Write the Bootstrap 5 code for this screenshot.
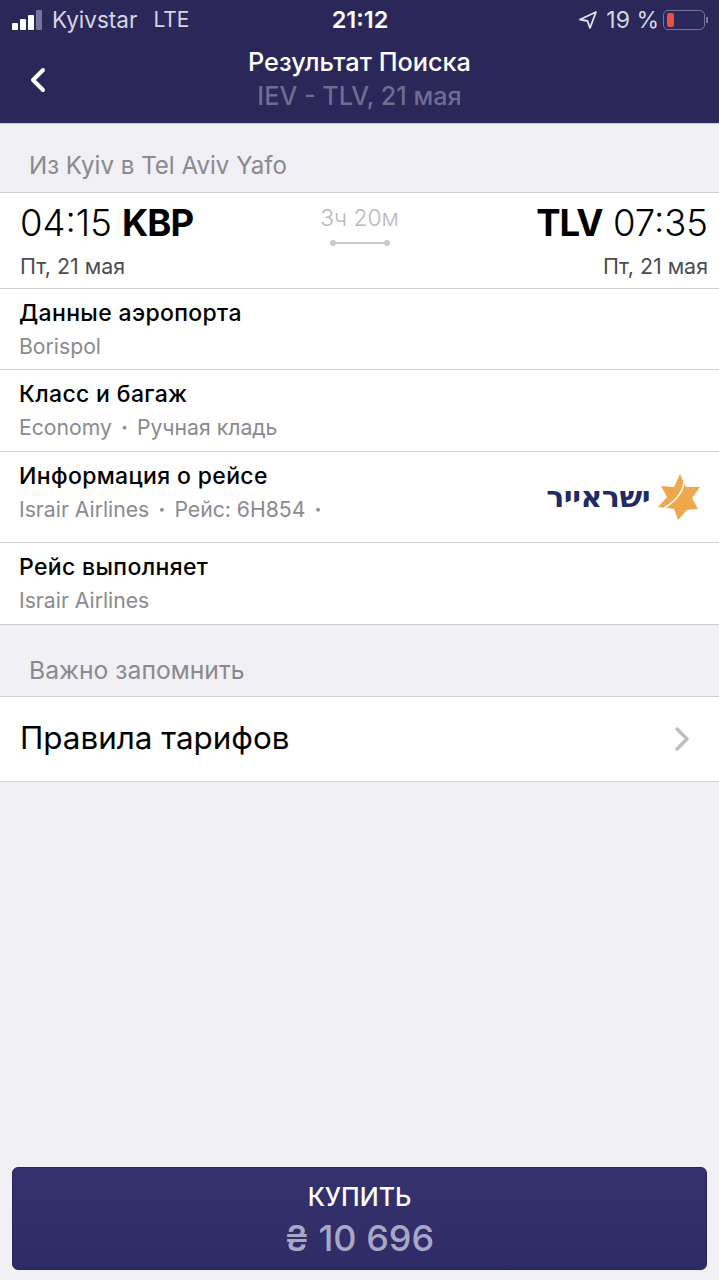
<!DOCTYPE html>
<html lang="en">
<head>
  <meta charset="UTF-8">
  <meta name="viewport" content="width=device-width, initial-scale=1.0">
  <title>Результат Поиска</title>
  <link href="https://cdn.jsdelivr.net/npm/bootstrap@5.3.2/dist/css/bootstrap.min.css" rel="stylesheet">
  <style>
    body {
      background: #f0f0f5;
      font-family: Inter, "Noto Sans", sans-serif;
      color: #000;
      height: 1280px;
      overflow: hidden;
    }
    .app-head {
      background: #2b2759;
      color: #fff;
      height: 124px;
      border-bottom: 1px solid #c9c8d8;
    }
    .status-line {
      height: 40px;
      padding: 0 11px 0 12px;
      font-size: 21px;
    }
    .status-line .carrier { color: #d6d5e4; font-size: 22.5px; }
    .status-line .lte-mark { margin-left: 16px; font-size: 21px; }
    .status-line .batt-pct { font-size: 23px; }
    .status-time { font-weight: 600; font-size: 23.5px; }
    .status-side { width: 250px; }
    .signal-bars { gap: 2px; height: 20px; margin-right: 10px; }
    .signal-bars i { display: block; width: 6px; border-radius: 1px; background: #fff; }
    .batt-box {
      width: 42px; height: 20px; padding: 2px 3px;
      border: 1.5px solid #77749a; border-radius: 5px;
    }
    .batt-box i { display: block; width: 7px; height: 100%; background: #e9503f; border-radius: 2px; }
    .batt-tip { width: 2px; height: 6px; background: #77749a; margin-left: 1px; }
    .title-zone { height: 84px; }
    .back-btn { left: 29px; top: 27px; }
    .page-title { font-size: 25.3px; font-weight: 500; line-height: 34px; padding-top: 5px; }
    .page-sub { font-size: 25.2px; font-weight: 500; line-height: 34px; color: #6f6c92; }
    .section-head {
      height: 68px;
      padding: 26px 29px 0;
      font-size: 24.1px;
      line-height: 32px;
      color: #8a8a90;
    }
    .info-block { background: #fff; border-top: 1px solid #cfcfd4; border-bottom: 1px solid #cfcfd4; }
    .flight-row { height: 96px; padding: 6px 11px 0 20px; border-bottom: 1px solid #cfcfd4; }
    .flight-side { flex: 1 1 0; }
    .time-big { font-size: 36.5px; line-height: 48px; font-weight: 300; }
    .time-big b { font-weight: 700; letter-spacing: -1px; }
    .date-small { font-size: 21.4px; line-height: 28px; color: #4c4c50; margin-top: 5px; }
    .dur-box { width: 100px; padding-top: 5px; margin-right: 9px; }
    .dur-text { font-size: 22.8px; line-height: 28px; color: #b9b9bd; font-weight: 300; }
    .dur-line { width: 60px; height: 2px; background: #c9c9cc; margin-top: 10px; }
    .dur-line::before, .dur-line::after {
      content: ""; position: absolute; top: -2px;
      width: 6px; height: 6px; border-radius: 50%; background: #c9c9cc;
    }
    .dur-line::before { left: 0; }
    .dur-line::after { right: 0; }
    .detail-row { padding: 0 19px; border-bottom: 1px solid #cfcfd4; overflow: hidden; }
    .detail-row:last-child { border-bottom: 0; }
    .row-short { height: 81px; }
    .row-mid { height: 82px; }
    .row-tall { height: 91px; }
    .detail-label { font-size: 23px; font-weight: 500; line-height: 30px; letter-spacing: .35px; margin-top: 9px; }
    .detail-value { font-size: 21.2px; line-height: 28px; color: #8a8a90; margin-top: 4px; }
    .sep-dot { margin: 0 9px; font-weight: 700; }
    .logo-box { width: 165px; }
    .logo-word {
      font-family: "DejaVu Sans", sans-serif;
      font-size: 30px; font-weight: 700; line-height: 30px;
      color: #1f2a66; letter-spacing: -.5px;
    }
    .rules-row { height: 84px; padding: 0 29px 0 20px; font-size: 31.4px; }
    .section-gap { height: 71px; padding-top: 29px; font-size: 24.7px; }
    .buy-wrap { padding: 0 12px 10px; }
    .buy-btn {
      display: block; width: 100%; height: 103px; padding: 4px 0 0;
      background: linear-gradient(#36326f, #2f2b66); border: 1px solid #28255a; border-radius: 6px; color: #fff;
      font-size: 25px; font-weight: 500; line-height: 34px;
    }
    .buy-price { font-size: 36px; line-height: 48px; font-weight: 500; color: #a9a7c6; }
  </style>
</head>
<body class="d-flex flex-column">
  <header class="app-head flex-shrink-0">
    <div class="status-line d-flex align-items-center justify-content-between">
      <div class="status-side d-flex align-items-center">
        <div class="signal-bars d-flex align-items-end">
          <i style="height: 7px"></i>
          <i style="height: 11px"></i>
          <i style="height: 15px"></i>
          <i style="height: 20px; background: #77749a"></i>
        </div>
        <span class="carrier">Kyivstar</span>
        <span class="carrier lte-mark">LTE</span>
      </div>
      <div class="status-time">21:12</div>
      <div class="status-side d-flex align-items-center justify-content-end">
        <svg width="20" height="20" viewBox="0 0 20 20" fill="none" stroke="#e4e3ee" stroke-width="1.8" stroke-linejoin="round" class="me-2"><path d="M18 2 2 9.5l7.5 1.5L12 18z"/></svg>
        <span class="carrier batt-pct me-1">19 %</span>
        <div class="batt-box"><i></i></div>
        <div class="batt-tip"></div>
      </div>
    </div>
    <div class="title-zone position-relative text-center">
      <svg class="back-btn position-absolute" width="18" height="26" viewBox="0 0 18 26" fill="none" stroke="#fff" stroke-width="4" stroke-linecap="round" stroke-linejoin="round"><path d="M14 3 4 13l10 10"/></svg>
      <div class="page-title">Результат Поиска</div>
      <div class="page-sub">IEV - TLV, 21 мая</div>
    </div>
  </header>

  <div class="section-head">Из Kyiv в Tel Aviv Yafo</div>
  <section class="info-block">
    <div class="flight-row d-flex justify-content-between">
      <div class="flight-side">
        <div class="time-big">04:15 <b>KBP</b></div>
        <div class="date-small">Пт, 21 мая</div>
      </div>
      <div class="dur-box d-flex flex-column align-items-center">
        <div class="dur-text">3ч 20м</div>
        <div class="dur-line position-relative"></div>
      </div>
      <div class="flight-side text-end">
        <div class="time-big"><b>TLV</b> 07:35</div>
        <div class="date-small">Пт, 21 мая</div>
      </div>
    </div>
    <div class="detail-row row-short">
      <div class="detail-label">Данные аэропорта</div>
      <div class="detail-value">Borispol</div>
    </div>
    <div class="detail-row row-mid">
      <div class="detail-label">Класс и багаж</div>
      <div class="detail-value">Economy<span class="sep-dot">·</span>Ручная кладь</div>
    </div>
    <div class="detail-row row-tall d-flex justify-content-between">
      <div>
        <div class="detail-label">Информация о рейсе</div>
        <div class="detail-value">Israir Airlines<span class="sep-dot">·</span>Рейс: 6H854<span class="sep-dot">·</span></div>
      </div>
      <div class="logo-box d-flex align-items-center justify-content-end gap-2">
        <span class="logo-word" dir="rtl">ישראייר</span>
        <svg width="42" height="48" viewBox="0 0 42 48" class="flex-shrink-0"><path fill="#eea94f" d="M22 1l6 13 14 0-8 11 6 11-11 1-9 10-4-11-16-2 9-10-6-11 13 1z"/><path fill="none" stroke="#fff" stroke-width="1.6" d="M25 4c4 10-6 24-19 31"/></svg>
      </div>
    </div>
    <div class="detail-row row-short">
      <div class="detail-label">Рейс выполняет</div>
      <div class="detail-value">Israir Airlines</div>
    </div>
  </section>

  <div class="section-head section-gap">Важно запомнить</div>
  <section class="info-block">
    <div class="rules-row d-flex align-items-center justify-content-between">
      <span>Правила тарифов</span>
      <svg width="16" height="26" viewBox="0 0 16 26" fill="none" stroke="#bdbdc1" stroke-width="3.4" stroke-linecap="round" stroke-linejoin="round"><path d="M3 3l10 10L3 23"/></svg>
    </div>
  </section>

  <div class="buy-wrap mt-auto">
    <button type="button" class="buy-btn">
      КУПИТЬ
      <div class="buy-price">₴ 10 696</div>
    </button>
  </div>
</body>
</html>
